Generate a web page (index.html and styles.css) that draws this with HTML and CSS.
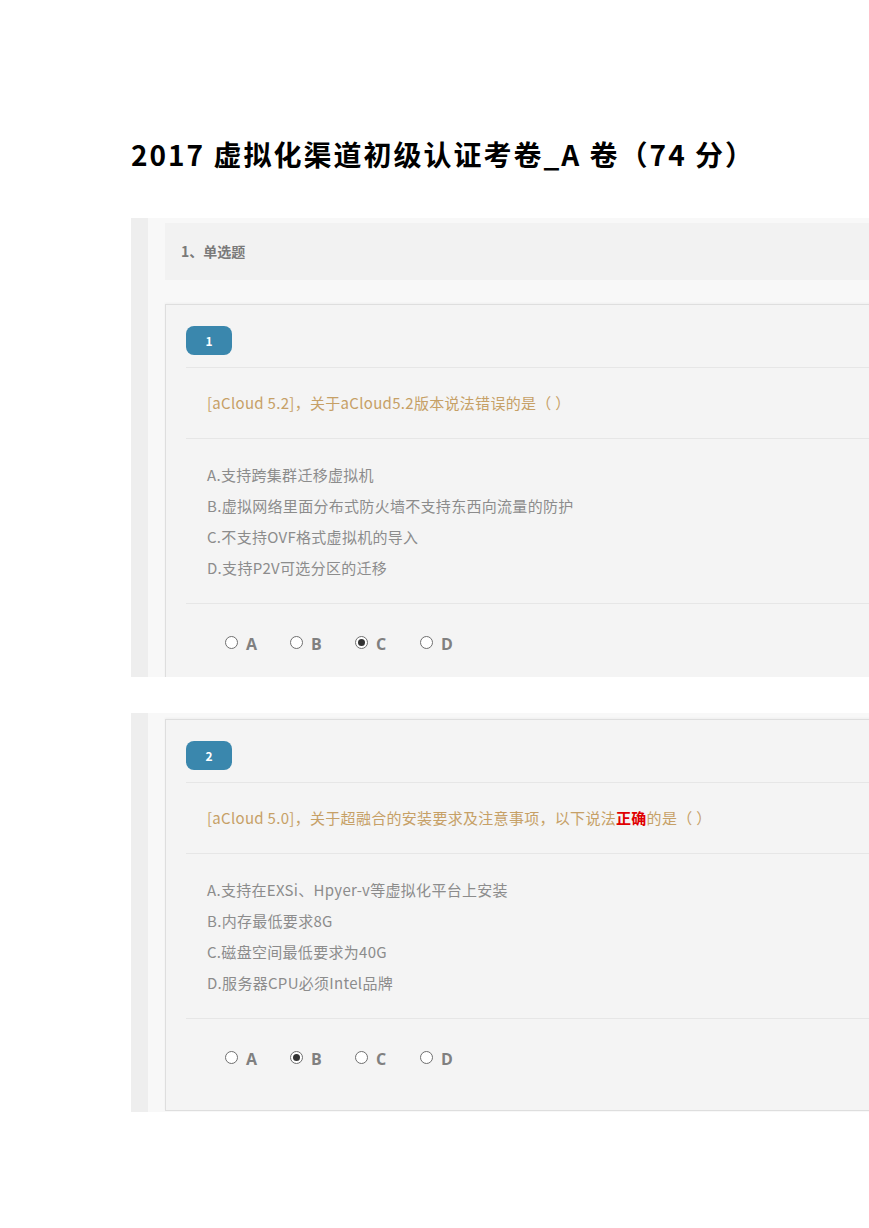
FILE: index.html
```html
<!doctype html>
<html>
<head>
    <meta charset="UTF-8">
    <title>2017 虚拟化渠道初级认证考卷_A 卷</title>
    <link rel="stylesheet" href="styles.css">
</head>
<body>
    <div class="page">
        <h1 class="doc-title">2017 虚拟化渠道初级认证考卷_A 卷（74 分）</h1>

        <!-- 第一张截图：题型标题 + 第 1 题（底部被截断） -->
        <div class="shot shot-first">
            <div class="section-head">1、单选题</div>
            <div class="card">
                <div class="card-badge">1</div>
                <div class="card-question">[aCloud 5.2]，关于aCloud5.2版本说法错误的是（ ）</div>
                <div class="card-options">
                    <p>A.支持跨集群迁移虚拟机</p>
                    <p>B.虚拟网络里面分布式防火墙不支持东西向流量的防护</p>
                    <p>C.不支持OVF格式虚拟机的导入</p>
                    <p>D.支持P2V可选分区的迁移</p>
                </div>
                <div class="card-answer">
                    <span class="radio"><i class="radio-dot"></i>A</span>
                    <span class="radio"><i class="radio-dot"></i>B</span>
                    <span class="radio"><i class="radio-dot checked"></i>C</span>
                    <span class="radio"><i class="radio-dot"></i>D</span>
                </div>
            </div>
        </div>

        <!-- 第二张截图：第 2 题 -->
        <div class="shot shot-second">
            <div class="card">
                <div class="card-badge">2</div>
                <div class="card-question">[aCloud 5.0]，关于超融合的安装要求及注意事项，以下说法<b class="key">正确</b>的是（ ）</div>
                <div class="card-options">
                    <p>A.支持在EXSi、Hpyer-v等虚拟化平台上安装</p>
                    <p>B.内存最低要求8G</p>
                    <p>C.磁盘空间最低要求为40G</p>
                    <p>D.服务器CPU必须Intel品牌</p>
                </div>
                <div class="card-answer">
                    <span class="radio"><i class="radio-dot"></i>A</span>
                    <span class="radio"><i class="radio-dot checked"></i>B</span>
                    <span class="radio"><i class="radio-dot"></i>C</span>
                    <span class="radio"><i class="radio-dot"></i>D</span>
                </div>
            </div>
        </div>
    </div>
</body>
</html>
```

FILE: styles.css
```css
body {
    margin: 0;
    background-color: #ffffff;
    font-family: "Noto Sans CJK SC", "Noto Sans", sans-serif;
}
.page {
    padding: 134px 0 0 131px;
}

.doc-title {
    margin: 0 0 44px 0;
    font-size: 28px;
    line-height: 40px;
    font-weight: 700;
    letter-spacing: 2px;
    color: #000000;
}

/* 每张截图：左侧一条灰边，右侧被窗口截断 */
.shot {
    box-sizing: border-box;
    width: 738px;
    overflow: hidden;
    border-left: 17px solid #eeeeee;
    padding-left: 17px;
    background-color: #f8f8f8;
}
.shot-first {
    height: 459px;
    padding-top: 5px;
}
.shot-second {
    margin-top: 36px;
    padding-top: 6px;
    padding-bottom: 1px;
}

.section-head {
    height: 57px;
    line-height: 57px;
    padding-left: 16px;
    margin-bottom: 24px;
    background-color: #f2f2f2;
    font-size: 14px;
    font-weight: 700;
    color: #7a7a7a;
}

.card {
    margin-right: -60px;
    padding: 21px 0 0 20px;
    background-color: #f4f4f4;
    border: 1px solid #dedede;
    border-right: none;
    box-shadow: 0 -1px 2px rgba(0, 0, 0, 0.04);
}
.card-badge {
    width: 46px;
    height: 29px;
    margin-bottom: 12px;
    border-radius: 8px;
    background-color: #3a87ad;
    color: #ffffff;
    font-size: 12px;
    font-weight: 700;
    line-height: 29px;
    text-align: center;
}
.card-question {
    height: 70px;
    line-height: 70px;
    padding-left: 21px;
    border-top: 1px solid #e6e6e6;
    font-size: 15px;
    letter-spacing: 0.3px;
    color: #c6a066;
    white-space: nowrap;
}
.card-question .key {
    color: #e00000;
}
.card-options {
    padding: 20px 0 20px 21px;
    border-top: 1px solid #e6e6e6;
    font-size: 15px;
    letter-spacing: 0.3px;
    color: #8c8c8c;
}
.card-options p {
    margin: 0;
    line-height: 31px;
    white-space: nowrap;
}

/* 单选按钮行 */
.card-answer {
    display: flex;
    align-items: center;
    height: 92px;
    padding: 0 0 12px 39px;
    box-sizing: border-box;
    border-top: 1px solid #e6e6e6;
}
.radio {
    display: flex;
    align-items: center;
    width: 65px;
    font-family: "Open Sans", sans-serif;
    font-size: 16px;
    font-weight: 700;
    color: #808080;
}
.radio-dot {
    position: relative;
    box-sizing: border-box;
    width: 13px;
    height: 13px;
    margin-right: 8px;
    margin-top: -3px;
    border: 1px solid #6f6f6f;
    border-radius: 50%;
    background-color: #ffffff;
}
.radio-dot.checked::after {
    content: "";
    position: absolute;
    left: 2px;
    top: 2px;
    width: 7px;
    height: 7px;
    border-radius: 50%;
    background-color: #333333;
}
```
